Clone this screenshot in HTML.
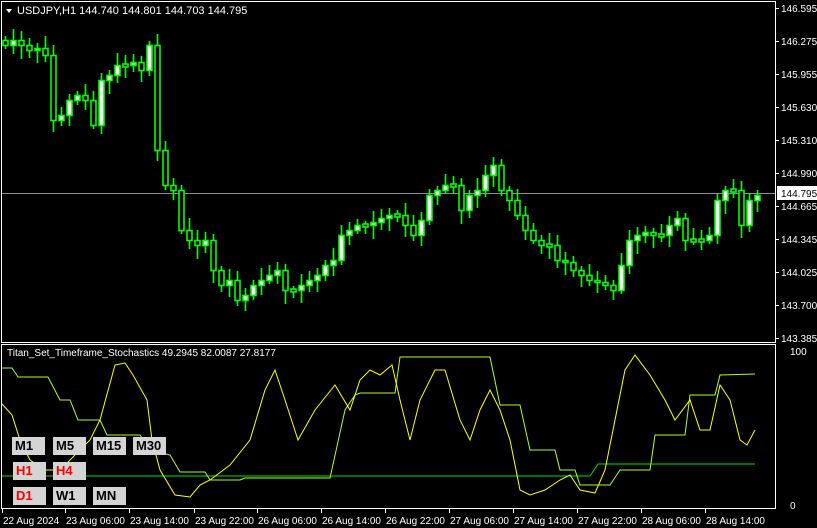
<!DOCTYPE html>
<html><head><meta charset="utf-8"><style>
body{margin:0;background:#000;width:817px;height:528px;overflow:hidden;font-family:"Liberation Sans",sans-serif;}
svg{position:absolute;left:0;top:0}
text{font-family:"Liberation Sans",sans-serif;font-size:10px;fill:#fff}
.b{position:absolute;background:#d4d4d4;width:33px;height:18px;font:bold 13px "Liberation Sans",sans-serif;color:#000;line-height:18px;text-indent:3px}
.r{color:#f00}
</style></head><body>
<svg id="s" width="817" height="528">
<rect x="1.5" y="1.5" width="774" height="341" fill="none" stroke="#fff"/>
<rect x="1.5" y="344.5" width="774" height="164" fill="none" stroke="#fff"/>
<line x1="2" y1="193.5" x2="775" y2="193.5" stroke="#8a8f99"/>
<g id="c"></g>
<polyline fill="none" stroke="#00e000" points="2,476 590,476 598,464 755,464"/>
<polyline fill="none" stroke="#b0ff20" points="2,368 12,368 18,377 48,377 60,400 70,400 78,420 100,420 107,435 140,435 150,450 170,455 180,472 205,472 210,480 240,480 245,478 330,478 345,410 355,395 360,393 395,393 400,357 490,357 500,405 520,405 530,450 555,450 560,470 575,470 580,485 610,485 620,470 650,470 655,435 685,435 690,395 715,395 720,375 755,374"/>
<polyline fill="none" stroke="#ffff00" points="2,404 12,415 20,440 30,460 45,470 60,470 90,440 100,420 115,365 125,363 133,375 147,400 152,440 160,470 175,495 190,497 200,485 210,480 230,465 250,440 265,390 275,370 285,400 298,440 315,410 335,385 350,410 360,380 370,370 380,375 392,365 400,400 410,440 420,400 435,370 445,370 460,420 470,440 480,410 490,390 500,410 510,440 520,490 530,495 545,490 560,480 570,475 580,490 595,493 605,470 615,420 625,370 635,355 650,375 665,400 675,420 690,400 700,430 710,430 720,385 730,400 740,440 747,445 755,430"/>
<polygon points="6,9 12,9 9,13" fill="#fff"/>
<text x="17" y="14" style="font-size:11px">USDJPY,H1  144.740 144.801 144.703 144.795</text>
<text x="7" y="356">Titan_Set_Timeframe_Stochastics 49.2945 82.0087 27.8177</text>
<g id="ax"></g>
<rect x="777" y="186" width="40" height="14" fill="#fff"/>
<text x="781" y="197" style="fill:#000">144.795</text>
<text x="790" y="355">100</text>
<text x="790" y="509">0</text>
</svg>
<div class="b" style="left:12px;top:437px">M1</div>
<div class="b" style="left:53px;top:437px">M5</div>
<div class="b" style="left:93px;top:437px">M15</div>
<div class="b" style="left:133px;top:437px">M30</div>
<div class="b r" style="left:13px;top:462px">H1</div>
<div class="b r" style="left:53px;top:462px">H4</div>
<div class="b r" style="left:13px;top:487px">D1</div>
<div class="b" style="left:53px;top:487px">W1</div>
<div class="b" style="left:93px;top:487px">MN</div>
<script>
var ns="http://www.w3.org/2000/svg";
function el(p,t,a){var e=document.createElementNS(ns,t);for(var k in a)e.setAttribute(k,a[k]);p.appendChild(e);return e;}
var ax=document.getElementById('ax');
var pl=[["146.595",8],["146.275",41],["145.955",74],["145.630",107],["145.310",140],["144.990",173],["144.665",206],["144.345",239],["144.025",272],["143.700",305],["143.385",338]];
pl.forEach(function(p){el(ax,'line',{x1:776,x2:779,y1:p[1]+.5,y2:p[1]+.5,stroke:'#fff'});var t=el(ax,'text',{x:781,y:p[1]+4});t.textContent=p[0];});
var tl=[["22 Aug 2024",2],["23 Aug 06:00",65],["23 Aug 14:00",129],["23 Aug 22:00",194],["26 Aug 06:00",257],["26 Aug 14:00",321],["26 Aug 22:00",385],["27 Aug 06:00",449],["27 Aug 14:00",513],["27 Aug 22:00",577],["28 Aug 06:00",641],["28 Aug 14:00",705]];
tl.forEach(function(p){el(ax,'line',{x1:p[1]+.5,x2:p[1]+.5,y1:509,y2:513,stroke:'#fff'});var t=el(ax,'text',{x:p[1]+1,y:524});t.textContent=p[0];});
var cl=[45,40,45,50,48,55,120,115,100,95,100,125,80,75,65,65,62,70,45,150,185,190,230,240,245,240,270,285,280,300,295,285,280,275,270,290,290,285,280,275,265,260,235,230,225,225,222,218,215,215,225,235,220,195,190,185,185,210,195,190,175,165,190,200,215,230,240,245,245,260,262,270,275,280,282,285,290,265,240,235,232,235,235,225,218,240,240,240,235,200,190,190,225,200,195];
var g=document.getElementById('c');var prev=40;
cl.forEach(function(c,i){var x=5+i*8,o=prev;prev=c;var top=Math.min(o,c),bot=Math.max(o,c);
var h=top-4-(i*7%9),l=bot+4+(i*5%11);
el(g,'line',{x1:x+.5,x2:x+.5,y1:h,y2:l,stroke:'#00ff00','stroke-width':1.6});
if(bot-top<2){el(g,'rect',{x:x-2,y:top-1,width:5,height:3,fill:'#000',stroke:'#00ff00','stroke-width':1.6});}
else el(g,'rect',{x:x-2,y:top+.5,width:5,height:bot-top,fill:c<o?'#fff':'#000',stroke:'#00ff00','stroke-width':1.6});});
</script>
</body></html>
